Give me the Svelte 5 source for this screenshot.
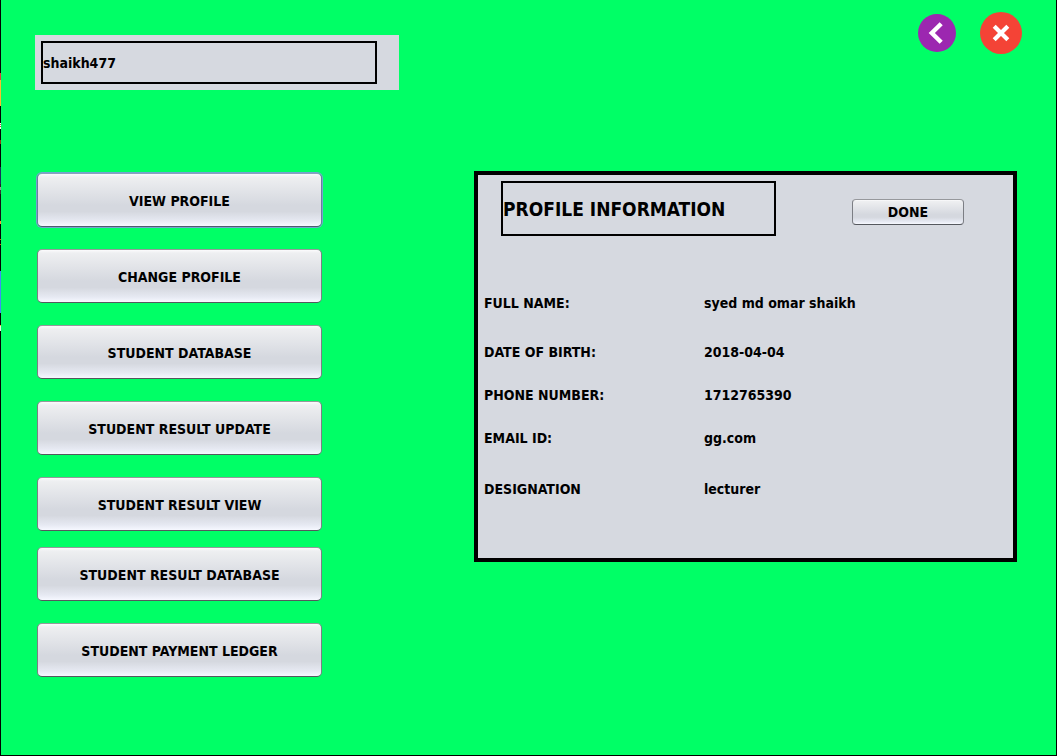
<script>
  const actions = [
    { label: 'VIEW PROFILE', active: true },
    { label: 'CHANGE PROFILE' },
    { label: 'STUDENT DATABASE' },
    { label: 'STUDENT RESULT UPDATE' },
    { label: 'STUDENT RESULT VIEW' },
    { label: 'STUDENT RESULT DATABASE', tight: true },
    { label: 'STUDENT PAYMENT LEDGER' }
  ];

  const fields = [
    { label: 'FULL NAME:', value: 'syed md omar shaikh' },
    { label: 'DATE OF BIRTH:', value: '2018-04-04', section: true },
    { label: 'PHONE NUMBER:', value: '1712765390' },
    { label: 'EMAIL ID:', value: 'gg.com' },
    { label: 'DESIGNATION', value: 'lecturer', section: true }
  ];
</script>

<div class="window">
  <div class="edge" aria-hidden="true"></div>
  <div class="content">
    <header>
      <div class="user-panel">
        <div class="user-name">shaikh477</div>
      </div>
      <nav>
        <button class="round back" aria-label="Back">
          <svg viewBox="0 0 38 38" width="38" height="38">
            <circle cx="19" cy="19" r="19" fill="#9c27b0" />
            <path d="M23.2 9.7 13.8 19l9.4 9.3" fill="none" stroke="#fff" stroke-width="4.4" />
          </svg>
        </button>
        <button class="round close" aria-label="Close">
          <svg viewBox="0 0 42 42" width="42" height="42">
            <circle cx="21" cy="21" r="21" fill="#f44336" />
            <path d="M14.2 14.2 27.8 27.8M27.8 14.2 14.2 27.8" fill="none" stroke="#fff" stroke-width="4.2" />
          </svg>
        </button>
      </nav>
    </header>

    <main>
      <div class="actions">
        {#each actions as action}
          <button class="metal" class:active={action.active} class:tight={action.tight}>{action.label}</button>
        {/each}
      </div>

      <section class="profile">
        <div class="profile-head">
          <h2>PROFILE INFORMATION</h2>
          <button class="metal done">DONE</button>
        </div>
        <dl>
          {#each fields as field}
            <div class="field" class:section={field.section}>
              <dt>{field.label}</dt>
              <dd>{field.value}</dd>
            </div>
          {/each}
        </dl>
      </section>
    </main>
  </div>
</div>

<style>
  :global(body) {
    margin: 0;
    background: #00ff66;
  }

  .window {
    display: flex;
    box-sizing: border-box;
    min-height: 100vh;
    border: solid #000;
    border-width: 0 1px 1px 0;
    background: #00ff66;
    color: #000;
    font: bold 14px/18px Tahoma, "DejaVu Sans Condensed", "Noto Sans", sans-serif;
  }

  .edge {
    flex: none;
    width: 1px;
    background: linear-gradient(
      #000 73px, #d8433a 73px 80px, #f9bd2e 80px 106px, #000 106px 123px,
      #fff 123px 124px, #a55 124px 125px, #fff 125px 126px, #a63 126px 127px, #fff 127px 129px,
      #000 129px 140px, #8a3a10 140px 144px, #000 144px 167px, #16305c 167px 184px,
      #222 184px 187px, #999 187px 190px, #333 190px 194px, #111 194px 221px,
      #f93 221px 224px, #000 224px 239px, #c60 239px 240px, #000 240px 244px,
      #c60 244px 245px, #000 245px 271px, #3f8cf4 271px 313px, #000 313px 325px,
      #f9bd2e 325px 326px, #e6f5e6 326px 331px, #000 331px
    );
  }

  .content {
    flex: 1;
    min-width: 0;
  }

  header {
    display: flex;
    justify-content: space-between;
    align-items: flex-start;
    padding: 12px 34px 0;
  }

  .user-panel {
    box-sizing: border-box;
    width: 37%;
    max-width: 364px;
    margin-top: 23px;
    padding: 6px 22px 6px 6px;
    background: #d6d9e0;
  }

  .user-name {
    padding: 11px 0 10px;
    border: 2px solid #000;
  }

  nav {
    display: flex;
    align-items: center;
    gap: 24px;
  }

  button {
    margin: 0;
    padding: 0;
    border: 0;
    color: inherit;
    font: inherit;
    cursor: pointer;
  }

  .round {
    display: flex;
    border-radius: 50%;
    background: none;
  }

  main {
    display: grid;
    grid-template-columns: minmax(0, 285fr) minmax(0, 543fr);
    align-items: start;
    gap: 152px;
    padding: 81px 39px 40px 36px;
  }

  .actions {
    display: flex;
    flex-direction: column;
    gap: 22px;
    padding-top: 2px;
  }

  .metal {
    box-sizing: border-box;
    height: 54px;
    padding-top: 2px;
    border: 1px solid;
    border-color: #96989c #7c7e84 #55585e;
    border-radius: 5px;
    background: linear-gradient(#fbfbfc, #eeeff1 6%, #d5d8df 60%, #d5d8df 72%, #e6e9f2 90%, #f6f8ff);
  }

  .metal.active {
    box-shadow: 0 0 0 1px #73a4d1;
    border-color: #8aa0bc #6b7f9c #4d5a6e;
  }

  .metal.tight {
    margin-top: -6px;
  }

  .profile {
    box-sizing: border-box;
    min-height: 391px;
    padding: 6px 6px 20px;
    border: 4px solid #000;
    background: #d6d9e0;
  }

  .profile-head {
    display: flex;
    justify-content: space-between;
    align-items: flex-start;
    padding: 0 43px 0 17px;
  }

  h2 {
    box-sizing: border-box;
    width: 275px;
    margin: 0;
    padding: 14px 0 13px;
    border: 2px solid #000;
    font-size: 19px;
    line-height: 24px;
  }

  .metal.done {
    width: 112px;
    height: 26px;
    margin-top: 18px;
    padding: 0;
    border-radius: 4px;
  }

  dl {
    display: flex;
    flex-direction: column;
    gap: 25px;
    margin: 58px 0 0;
  }

  .field {
    display: grid;
    grid-template-columns: 220px 1fr;
  }

  .field.section {
    margin-top: 6px;
  }

  .field.section:last-child {
    margin-top: 8px;
  }

  dd {
    margin: 0;
  }
</style>
